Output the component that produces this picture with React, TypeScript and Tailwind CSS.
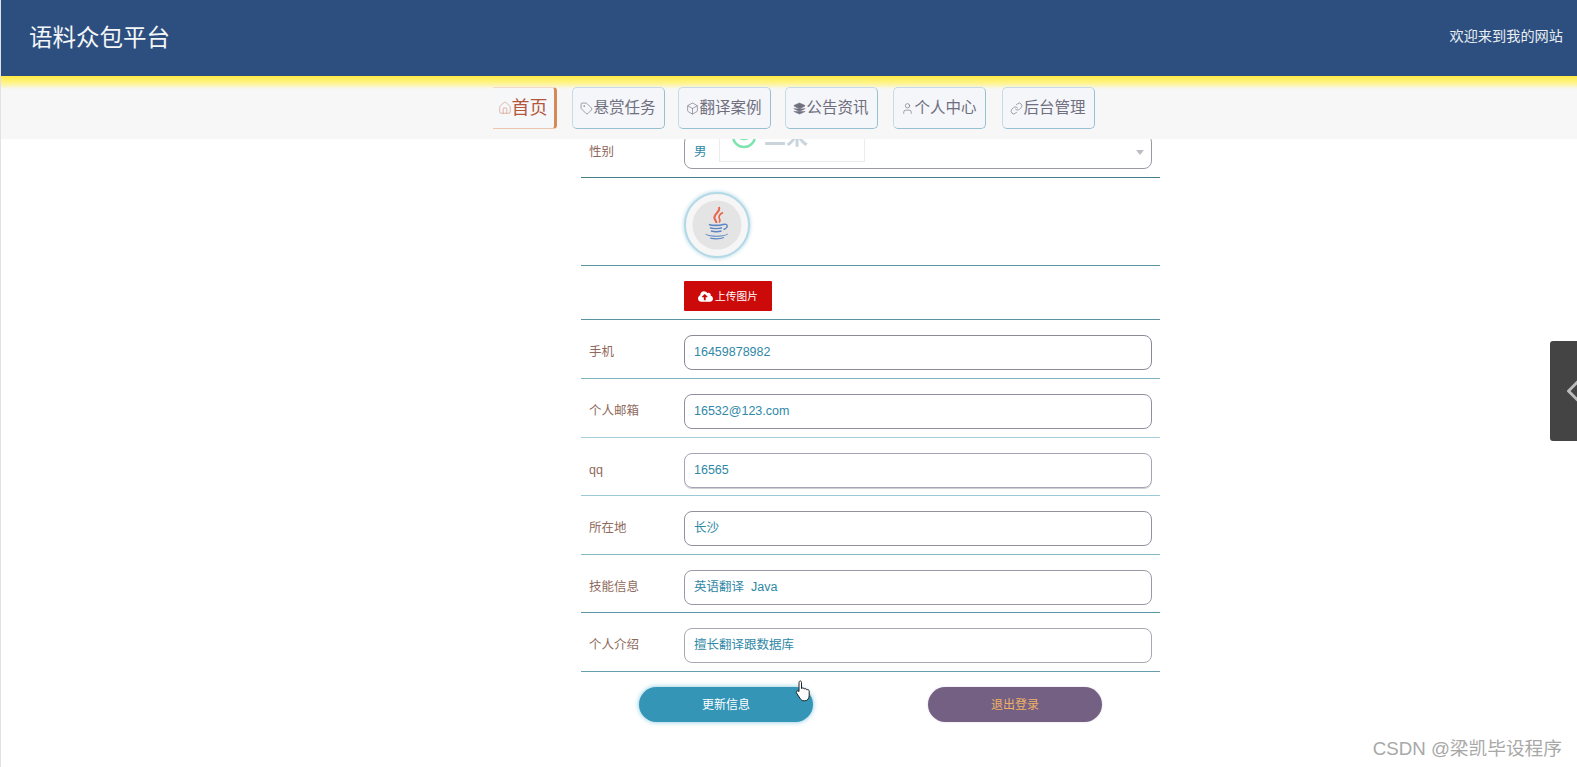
import { Home, Tag, Box, Layers, User, Link, ChevronLeft } from "lucide-react";
import { FaCloudUploadAlt } from "react-icons/fa";

const font = "font-['Liberation_Sans','Noto_Sans_CJK_SC',sans-serif]";

const navItems = [
  { label: "悬赏任务", Icon: Tag, fill: "none", gap: "ml-[15px]" },
  { label: "翻译案例", Icon: Box, fill: "none", gap: "ml-[13px]" },
  { label: "公告资讯", Icon: Layers, fill: "#6f6f80", gap: "ml-[14px]" },
  { label: "个人中心", Icon: User, fill: "none", gap: "ml-[15px]" },
  { label: "后台管理", Icon: Link, fill: "none", gap: "ml-[16px]" },
];

const rows = [
  { label: "手机", value: "16459878982", line: "border-[#7fb3c2]", h: "h-[59px]", input: "border-[#8a8a96]" },
  { label: "个人邮箱", value: "16532@123.com", line: "border-[#a5d0dc]", h: "h-[59px]", input: "border-[#9090a0]" },
  { label: "qq", value: "16565", line: "border-[#9cc9d6]", h: "h-[58px]", input: "border-[#a5a4b4] shadow-[0_1px_0_#cfcfd6]" },
  { label: "所在地", value: "长沙", line: "border-[#84b8c4]", h: "h-[59px]", input: "border-[#92929e]" },
  { label: "技能信息", value: "英语翻译  Java", line: "border-[#5b94a5]", h: "h-[58px]", input: "border-[#9a9aa6]" },
  { label: "个人介绍", value: "擅长翻译跟数据库", line: "border-[#669fb0]", h: "h-[59px]", input: "border-[#a8a8b2]" },
];

function JavaLogo() {
  return (
    <svg width="50" height="50" viewBox="0 0 50 50" fill="none">
      <circle cx="25" cy="25" r="24.5" fill="#e4e4e4" />
      <path d="M27 7c2 5-6 7-4.500 11.500.5 1.500 1.800 2.500 2 4.500" stroke="#e8654a" strokeWidth="2" />
      <path d="M31 12.500c-3 1.500-5 3.500-3.500 6.500.7 1.300.6 2.500-.5 3.500" stroke="#e8654a" strokeWidth="1.600" />
      <path d="M17 24.500c3 1.200 11 1.200 14 0M18 27.800c3 1 9 1 12 0M19 31c3 .9 7.500 .9 10.500 0" stroke="#5b86c4" strokeWidth="1.600" />
      <path d="M31 24.500c5-1.500 6 3 .5 5" stroke="#5b86c4" strokeWidth="1.400" />
      <path d="M13 33.500c5 3 19 3 23 0 1 3.500-21 5-23 0z" fill="#5b86c4" />
      <path d="M18 38c4 1 10 1 14-.5" stroke="#5b86c4" strokeWidth="1.100" />
    </svg>
  );
}

function Field({ label, value, line, h, input }: { label: string; value: string; line: string; h: string; input: string }) {
  return (
    <div className={`flex ${h} items-start border-b ${line} pt-[15px] pl-[8px] pr-[8px]`}>
      <div className="w-[95px] h-[35px] flex items-center text-[12.5px] text-[#8f6a5c]">{label}</div>
      <div className={`flex-1 h-[35px] flex items-center rounded-[8px] border ${input} pl-[9px] text-[12.5px] text-[#2f88a6] whitespace-pre`}>
        {value}
      </div>
    </div>
  );
}

export default function App() {
  return (
    <div className={`relative h-screen overflow-hidden bg-white border-l border-[#e2e2e2] ${font}`}>
      <header className="relative z-10 h-[76px] bg-[#2d4f7f] flex items-center justify-between pl-[28px] pr-[14px] text-white">
        <h1 className="mt-[1px] text-[23.5px] leading-none text-[#f4f6f8]">语料众包平台</h1>
        <span className="mb-[3px] text-[14.2px] text-[#e9eef4]">欢迎来到我的网站</span>
      </header>

      <nav className="relative z-10 h-[63px] bg-[linear-gradient(to_bottom,#ffec45_0px,#fff48a_7px,#f7f7f7_13px)] pt-[11px] pl-[10px] flex justify-center">
        <a className="w-[64px] h-[42px] flex items-center justify-center rounded-r-[4px] border-b border-[#ecc7ae] border-t border-t-[#f3d9c6] border-r-[3px] border-r-[#d68a58] bg-[#f6f7f8] pr-[2px] text-[18px] text-[#b3563c]">
          <Home size={14} strokeWidth={1} color="#d08a70" className="shrink-0" />
          首页
        </a>
        {navItems.map(({ label, Icon, fill, gap }) => (
          <a
            key={label}
            className={`${gap} w-[93px] h-[42px] flex items-center justify-center rounded-[5px] border border-[#c6dbe5] border-r-[#97c1d3] border-b-[#97c1d3] bg-[#f5f6f9] pr-[1px] text-[15.5px] text-[#6f6f80]`}
          >
            <Icon size={13} strokeWidth={1.2} color="#6f6f80" fill={fill} className="shrink-0" />
            {label}
          </a>
        ))}
      </nav>

      <main className="ml-[580px] w-[579px] mt-[-13px]">
        <div className="flex h-[52px] items-start border-b border-[#44808c] pt-2 pl-[8px] pr-[8px]">
          <div className="w-[95px] h-[35px] flex items-center pt-[1px] text-[12.5px] text-[#8f6a5c]">性别</div>
          <div className="relative flex-1 h-[35px] flex items-center rounded-[8px] border border-[#9a9aa6] pl-[9px] pt-[1px] text-[12.5px] text-[#2f88a6]">
            男
            <svg className="absolute right-[7px] top-[15px]" width="8" height="5" viewBox="0 0 10 6">
              <path d="M0 0h10L5 6z" fill="#bdbdc4" />
            </svg>
            <div className="absolute left-[34px] top-0 w-[146px] h-[27px] bg-white border border-[#ececec] overflow-hidden">
              <svg className="absolute left-[10px] top-[-14px]" width="28" height="28" viewBox="0 0 28 28" fill="none">
                <circle cx="14" cy="14" r="11" stroke="#7fe3b0" strokeWidth="2.500" />
                <path d="M8 14c2 4 10 4 12 0" stroke="#7fe3b0" strokeWidth="2.500" />
              </svg>
              <span className="absolute left-[44px] top-[-10px] text-[22px] leading-none font-bold text-[#c9d4dd]">二米</span>
            </div>
          </div>
        </div>

        <div className="h-[88px] border-b border-[#5b93a3] pt-[14px] pl-[103px]">
          <div className="w-[66px] h-[66px] flex items-center justify-center rounded-full border-2 border-[#b4d9e6] bg-[#f6f6f6] shadow-[0_0_4px_#a9d3e2]">
            <JavaLogo />
          </div>
        </div>

        <div className="h-[54px] border-b border-[#5b93a3] pt-[15px] pl-[103px]">
          <button className="w-[88px] h-[30px] flex items-center justify-center gap-[2px] rounded-[1px] bg-[#cc0a0a] text-[10.7px] text-white">
            <FaCloudUploadAlt size={15} color="#ffffff" />
            上传图片
          </button>
        </div>

        {rows.map((r) => (
          <Field key={r.label} {...r} />
        ))}

        <div className="flex pt-[15px] pl-[58px] gap-[115px]">
          <button className="w-[174px] h-[35px] rounded-full bg-[#3495b6] text-[12px] text-white shadow-[0_0_5px_#7cc3dc]">更新信息</button>
          <button className="w-[174px] h-[35px] rounded-full bg-[#736083] text-[12px] text-[#eeb063] shadow-[0_0_2px_#d8cfe0]">退出登录</button>
        </div>
      </main>

      <svg className="absolute left-[794px] top-[680px]" width="17" height="22" viewBox="0 0 17 22" fill="#ffffff" stroke="#222222" strokeWidth="1">
        <path d="M4 2.500c0-2 2.500-2 2.500 0v6c1-1 2.500-.5 2.700.5 1-.8 2.400-.3 2.600.8 1-.5 2.400 0 2.400 1.500v4c0 3-1.500 5.500-4.500 5.500H9c-2 0-3-1-4-2.500L1.500 13c-1-1.500.8-3 2.500-1.500z" />
      </svg>

      <div className="absolute right-0 top-[341px] w-[27px] h-[100px] rounded-l-[3px] bg-[#444444] flex items-center overflow-hidden">
        <ChevronLeft size={36} strokeWidth={2} color="#bcbcbc" className="ml-[5px] shrink-0" />
      </div>

      <div className="absolute right-[15px] top-[737px] text-[18.7px] leading-[24px] text-[#a8a8a8]">CSDN @梁凯毕设程序</div>
    </div>
  );
}
